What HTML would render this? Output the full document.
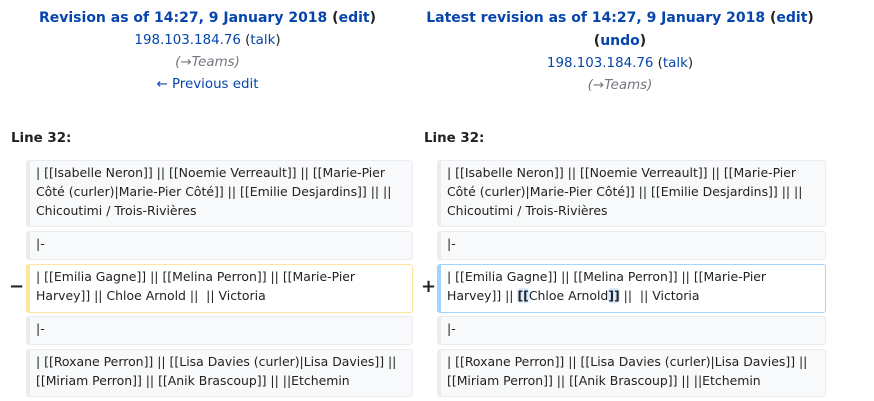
<!DOCTYPE html>
<html><head><meta charset="utf-8"><style>
body{margin:0;width:874px;height:401px;background:#fff;font-family:"DejaVu Sans",sans-serif;color:#222;position:relative;overflow:hidden}
a{color:#0645ad;text-decoration:none}
.hd{position:absolute;top:7px;text-align:center;font-size:13.4px;line-height:22px}
.hd b{font-size:14px}
.it{font-style:italic;color:#72777d}
.ln{position:absolute;top:131px;font-weight:bold;font-size:13.4px}
.bx{position:absolute;box-sizing:border-box;border:1px solid #eaecf0;border-left:4px solid #eaecf0;border-radius:3px;background:#f8f9fa;font-size:12.45px;line-height:19px;padding:2px 6px 0 6px;white-space:nowrap}
.del{background:#fff;border-color:#ffe49c}
.add{background:#fff;border-color:#a3d3ff}
.mk{position:absolute;font-size:18px;font-weight:bold}
.hl{background:#d8ecff;font-weight:bold;border-radius:3px}
</style></head><body>
<div class="hd" style="left:0;width:415px"><b><a>Revision as of 14:27, 9 January 2018</a> (<a>edit</a>)</b><br><a>198.103.184.76</a> (<a>talk</a>)<br><span class="it">(→Teams)</span><br><a>← Previous edit</a></div>
<div class="hd" style="left:413px;width:414px"><b><a>Latest revision as of 14:27, 9 January 2018</a> (<a>edit</a>)<br>(<a>undo</a>)</b><br><a>198.103.184.76</a> (<a>talk</a>)<br><span class="it">(→Teams)</span></div>
<div class="ln" style="left:11px">Line 32:</div>
<div class="ln" style="left:424px">Line 32:</div>

<div class="bx" style="left:26px;top:160px;width:387px;height:67px">| [[Isabelle Neron]] || [[Noemie Verreault]] || [[Marie-Pier<br>Côté (curler)|Marie-Pier Côté]] || [[Emilie Desjardins]] || ||<br>Chicoutimi / Trois-Rivières</div>
<div class="bx" style="left:26px;top:231px;width:387px;height:29px">|-</div>
<div class="mk" style="left:9px;top:276px">−</div>
<div class="bx del" style="left:26px;top:264px;width:387px;height:49px">| [[Emilia Gagne]] || [[Melina Perron]] || [[Marie-Pier<br>Harvey]] || Chloe Arnold || &nbsp;|| Victoria</div>
<div class="bx" style="left:26px;top:316px;width:387px;height:29px">|-</div>
<div class="bx" style="left:26px;top:349px;width:387px;height:48px">| [[Roxane Perron]] || [[Lisa Davies (curler)|Lisa Davies]] ||<br>[[Miriam Perron]] || [[Anik Brascoup]] || ||Etchemin</div>

<div class="bx" style="left:437px;top:160px;width:389px;height:67px">| [[Isabelle Neron]] || [[Noemie Verreault]] || [[Marie-Pier<br>Côté (curler)|Marie-Pier Côté]] || [[Emilie Desjardins]] || ||<br>Chicoutimi / Trois-Rivières</div>
<div class="bx" style="left:437px;top:231px;width:389px;height:29px">|-</div>
<div class="mk" style="left:421px;top:276px">+</div>
<div class="bx add" style="left:437px;top:264px;width:389px;height:49px">| [[Emilia Gagne]] || [[Melina Perron]] || [[Marie-Pier<br>Harvey]] || <span class="hl">[[</span>Chloe Arnold<span class="hl">]]</span> || &nbsp;|| Victoria</div>
<div class="bx" style="left:437px;top:316px;width:389px;height:29px">|-</div>
<div class="bx" style="left:437px;top:349px;width:389px;height:48px">| [[Roxane Perron]] || [[Lisa Davies (curler)|Lisa Davies]] ||<br>[[Miriam Perron]] || [[Anik Brascoup]] || ||Etchemin</div>
</body></html>
